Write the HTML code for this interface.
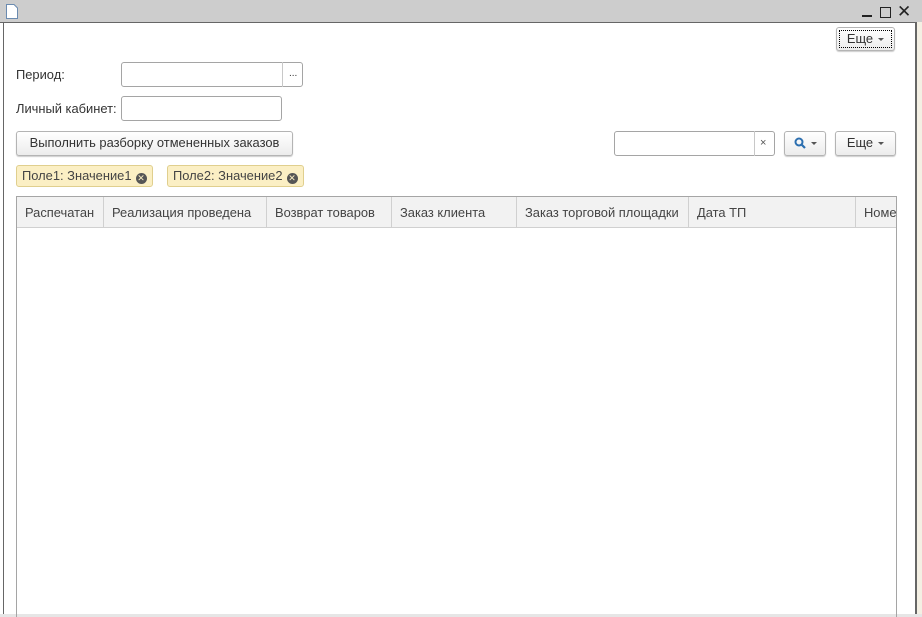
<!DOCTYPE html><html><head><meta charset="utf-8"><style>
*{margin:0;padding:0;box-sizing:border-box}
body{width:922px;height:617px;position:relative;overflow:hidden;background:#fff;font-family:"Liberation Sans","DejaVu Sans",sans-serif;font-size:12.9px;color:#333}
.a{position:absolute}
.inp{position:absolute;border:1px solid #a5a5a5;border-radius:3px;background:#fff}
.btn{position:absolute;border:1px solid #b4b4b4;border-radius:3px;background:linear-gradient(#fff,#ececec);text-align:center;line-height:22px;color:#333;box-shadow:0 1px 1px #ccc}
.tag{position:absolute;height:22px;border:1px solid #e0cf8e;border-radius:3px;background:#fbefc4;line-height:20px;padding-left:5px;color:#444;white-space:nowrap}
.x{display:inline-block;width:11px;height:11px;border-radius:50%;background:#555;color:#fbefc4;font-size:9px;line-height:11px;text-align:center;vertical-align:-1px;margin-left:4px}
.th{position:absolute;top:0;height:31px;line-height:31px;border-right:1px solid #d0d0d0;padding-left:8px;color:#444;white-space:nowrap;overflow:hidden}
.arr{display:inline-block;width:0;height:0;border-left:3px solid transparent;border-right:3px solid transparent;border-top:3px solid #555;vertical-align:2px;margin-left:5px}
</style></head><body>
<div class="a" style="left:0;top:0;width:922px;height:22px;background:#cdcdcd"></div>
<svg class="a" style="left:6px;top:4px" width="12" height="15"><path d="M.5 .5H8L11.5 4V14.5H.5Z" fill="#fff" stroke="#6b8bb0"/></svg>
<div class="a" style="left:862px;top:15px;width:10px;height:2px;background:#222"></div>
<div class="a" style="left:880px;top:7px;width:11px;height:11px;border:1.5px solid #222"></div>
<div class="a" style="left:897px;top:2px;font-size:17px;font-weight:bold;color:#222">✕</div>
<div class="a" style="left:3px;top:22px;width:1px;height:595px;background:#666"></div>
<div class="a" style="left:915px;top:22px;width:2px;height:595px;background:#666"></div>
<div class="a" style="left:917px;top:22px;width:5px;height:595px;background:#f4f0e4"></div>
<div class="a" style="left:0;top:22px;width:917px;height:1px;background:#666"></div>
<div class="a" style="left:0;top:614px;width:922px;height:3px;background:#e6e6e6"></div>

<div class="btn" style="left:836px;top:27px;width:59px;height:24px;outline:1px dotted #000;outline-offset:-4px">Еще<span class="arr"></span></div>

<div class="a" style="left:16px;top:67px">Период:</div>
<div class="inp" style="left:121px;top:62px;width:182px;height:25px"><div class="a" style="left:160px;top:-1px;width:1px;height:25px;background:#c8c8c8"></div><div class="a" style="left:167px;top:5px;font-size:10px">...</div></div>
<div class="a" style="left:16px;top:101px">Личный кабинет:</div>
<div class="inp" style="left:121px;top:96px;width:161px;height:25px"></div>

<div class="btn" style="left:16px;top:131px;width:277px;height:25px">Выполнить разборку отмененных заказов</div>

<div class="inp" style="left:614px;top:131px;width:161px;height:25px"><div class="a" style="left:139px;top:-1px;width:1px;height:25px;background:#c8c8c8"></div><div class="a" style="left:145px;top:5px;font-size:11px;color:#555">×</div></div>
<div class="btn" style="left:784px;top:131px;width:42px;height:25px"><svg width="12" height="12" style="vertical-align:-2px"><circle cx="5" cy="5" r="3.5" fill="none" stroke="#2c6fb0" stroke-width="2"/><path d="M7.5 7.5L11 11" stroke="#2c6fb0" stroke-width="2.2"/></svg><span class="arr"></span></div>
<div class="btn" style="left:835px;top:131px;width:61px;height:25px">Еще<span class="arr"></span></div>

<div class="tag" style="left:16px;top:165px;width:137px">Поле1: Значение1<span class="x">✕</span></div>
<div class="tag" style="left:167px;top:165px;width:137px">Поле2: Значение2<span class="x">✕</span></div>

<div class="a" style="left:16px;top:196px;width:881px;height:421px;border:1px solid #a5a5a5;border-bottom:none;overflow:hidden">
<div class="a" style="left:0;top:0;width:880px;height:31px;background:#f2f2f2;border-bottom:1px solid #d0d0d0"></div>
<div class="th" style="left:0;width:87px">Распечатан</div>
<div class="th" style="left:87px;width:163px">Реализация проведена</div>
<div class="th" style="left:250px;width:125px">Возврат товаров</div>
<div class="th" style="left:375px;width:125px">Заказ клиента</div>
<div class="th" style="left:500px;width:172px">Заказ торговой площадки</div>
<div class="th" style="left:672px;width:167px">Дата ТП</div>
<div class="th" style="left:839px;width:50px;border:none">Номер</div>
</div>
</body></html>
